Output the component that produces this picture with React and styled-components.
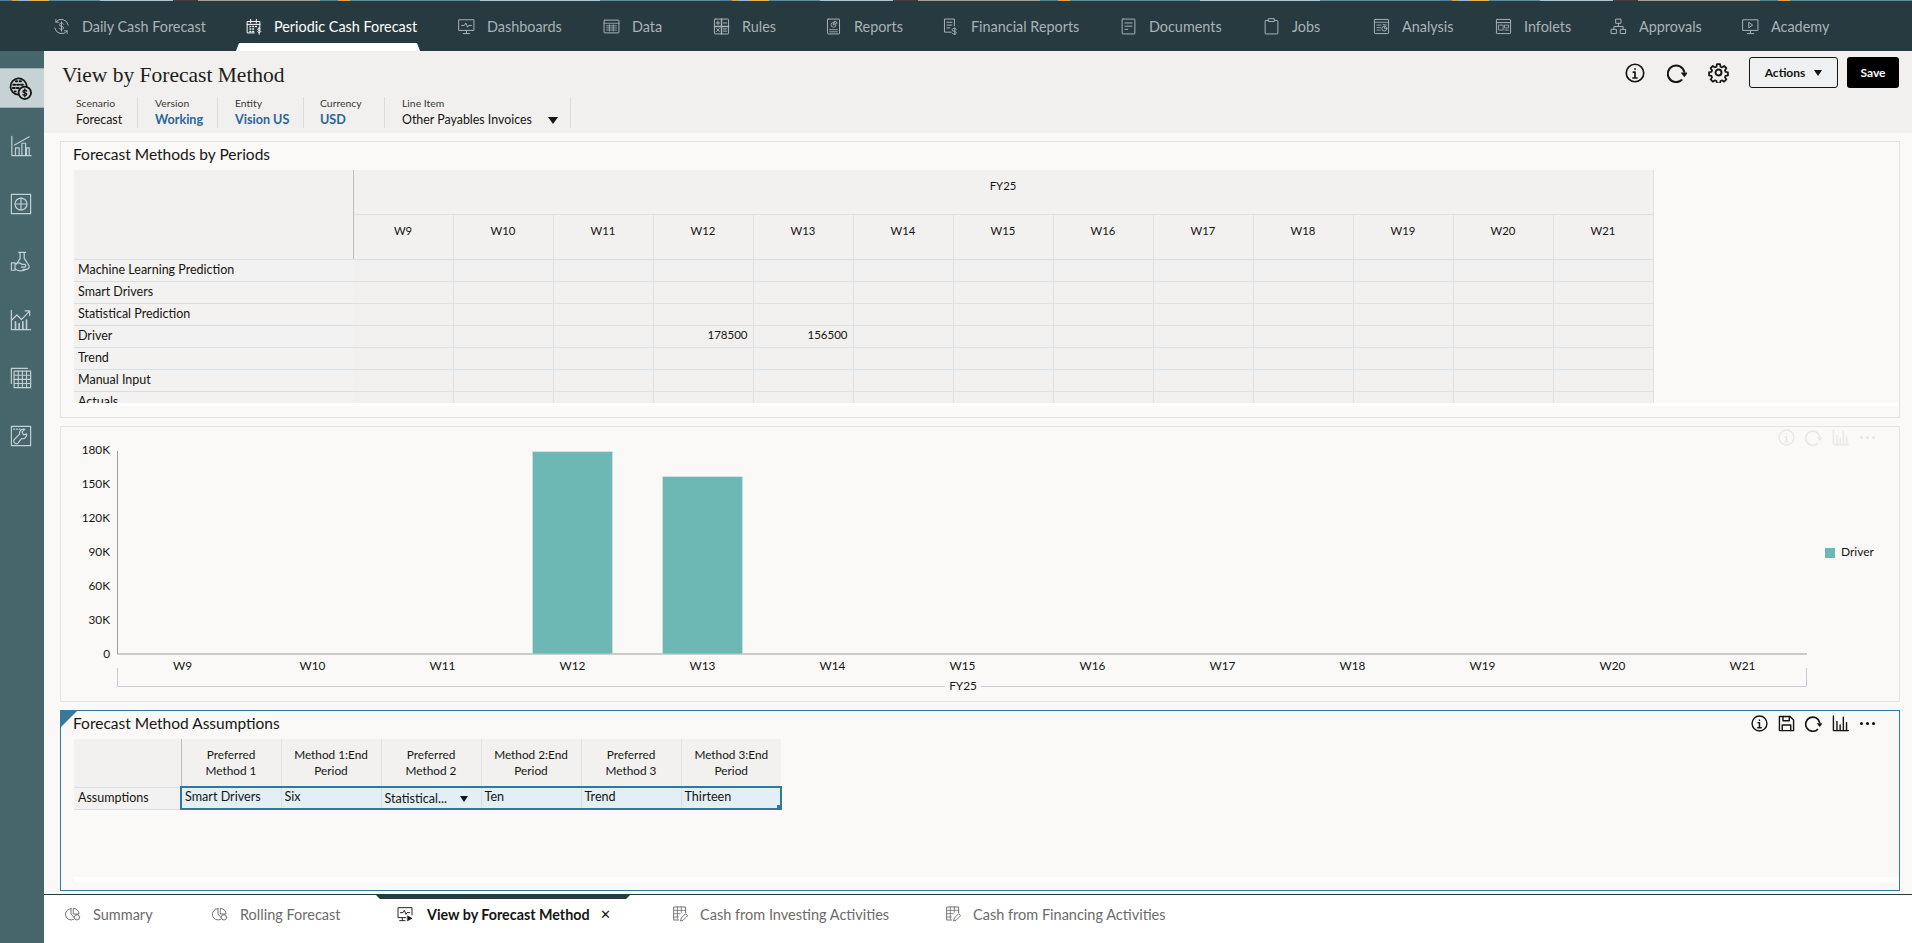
import React from 'react'
import styled, { createGlobalStyle } from 'styled-components'

const GlobalStyle = createGlobalStyle`
  html, body { margin: 0; padding: 0; height: 100%; overflow: hidden; }
  body {
    font-family: Lato, "Noto Sans", "Liberation Sans", sans-serif;
    font-size: 12px;
    color: #161513;
    background: #faf9f7;
  }
  * { box-sizing: border-box; }
`

const Svg = ({ size = 18, sw = 1.5, children }) => (
  <svg width={size} height={size} viewBox="0 0 24 24" fill="none" stroke="currentColor" strokeWidth={sw} strokeLinecap="round" strokeLinejoin="round">
    {children}
  </svg>
)

const dollar = (cx, cy, s = 1) => (
  <path d={`M${cx + 3 * s} ${cy - 2.5 * s}c-.6-1-1.6-1.5-3-1.5-1.8 0-3 .9-3 2.1 0 2.8 6 1.4 6 4 0 1.3-1.3 2-3 2-1.4 0-2.5-.5-3-1.5M${cx} ${cy - 5.5 * s}v11`} />
)

// top navigation icons
const navIcons = {
  daily: (
    <>
      <path d="M21.5 10A10 10 0 0 0 4 5.5M2.5 14A10 10 0 0 0 20 18.5" />
      <path d="M4 2v4h4M20 22v-4h-4" strokeWidth="1.2" />
      <path d="M15 8.8c-.6-1-1.6-1.4-3-1.4-1.8 0-3 .9-3 2.2 0 2.8 6 1.5 6 4.2 0 1.3-1.3 2.1-3 2.1-1.4 0-2.5-.5-3-1.5M12 5.5v13" />
    </>
  ),
  periodic: (
    <>
      <path d="M13 21H3V5h18v8M3 9h18M8 2v5M16 2v5" />
      <path d="M7 12h1M11 12h1M15 12h1M7 15.5h1M11 15.5h1M7 19h1M11 19h1" strokeWidth="2" />
      <path d="M22 15.5c-.5-.6-1.2-1-2-1-1.3 0-2.2.6-2.2 1.5 0 1.9 4.4 1 4.4 2.9 0 .9-1 1.5-2.2 1.5-1 0-1.7-.3-2.2-1M20 13v10" strokeWidth="1.4" />
    </>
  ),
  dashboards: (
    <>
      <rect x="1.5" y="2.5" width="21" height="15" />
      <path d="M5 10.5h4l2-3.5 2.5 6 1.5-2.5h4M12 17.5v4M7.5 22h9" />
    </>
  ),
  data: (
    <>
      <rect x="1.5" y="3" width="21" height="18" rx="1" />
      <path d="M1.5 7.5h21M5 11h14M5 14h14M5 17h14M9 9.5v9M14.5 9.5v9" strokeWidth="1.1" />
    </>
  ),
  rules: (
    <>
      <rect x="2" y="1.5" width="20" height="21" rx="1" />
      <path d="M12 1.5v21M2 12h20" strokeWidth="2" />
      <path d="M7 4.5v5M4.5 7h5M14.5 7h5M5 15l4 4M9 15l-4 4M14.5 15.5h5M14.5 18.5h5" />
    </>
  ),
  reports: (
    <>
      <rect x="3.5" y="1.5" width="17" height="21" rx="1" />
      <path d="M12 6a3.5 3.5 0 1 0 3.5 3.5H12zM14 4.5a3 3 0 0 1 3 3h-3zM6.5 16.5h11M6.5 19.5h11" strokeWidth="1.2" />
    </>
  ),
  financial: (
    <>
      <path d="M13 20H3.5V1.5h14V11" />
      <path d="M7 6h7M7 10h7M7 14h4" />
      {dollar(18, 18, 0.75)}
    </>
  ),
  documents: (
    <>
      <rect x="3" y="1.5" width="18" height="21" rx="1" />
      <path d="M7 7h10M7 11.5h10M7 16h4" />
    </>
  ),
  jobs: (
    <>
      <rect x="3" y="3.5" width="18" height="19" rx="1" />
      <rect x="8" y="1" width="8" height="4" fill="#273a40" />
    </>
  ),
  analysis: (
    <>
      <rect x="2" y="2" width="20" height="20" rx="1" />
      <path d="M2 6h20M5.5 10h6M5.5 13.5h5M5.5 17h5" strokeWidth="1.2" />
      <circle cx="16" cy="15" r="3.5" strokeWidth="1.3" />
      <path d="M16 11.5V15h3.5M14 9l5 1" strokeWidth="1.2" />
    </>
  ),
  infolets: (
    <>
      <rect x="2" y="2" width="20" height="20" rx="1" />
      <path d="M2 6.5h20" />
      <rect x="5.5" y="10" width="6" height="7" strokeWidth="1.2" />
      <rect x="14" y="10" width="5" height="4" strokeWidth="1.2" />
      <path d="M14 17h5" strokeWidth="1.2" />
    </>
  ),
  approvals: (
    <>
      <rect x="8.5" y="1.5" width="7" height="6" />
      <rect x="2" y="16" width="7" height="6" />
      <rect x="15" y="16" width="7" height="6" />
      <path d="M12 7.5v4.5M5.5 16v-4h13v4" />
    </>
  ),
  academy: (
    <>
      <rect x="1.5" y="2.5" width="21" height="15" />
      <path d="M10 6.5l5 3.5-5 3.5zM12 17.5v4M7.5 22h9" />
    </>
  ),
}

// left rail icons
const railIcons = {
  money: (
    <>
      <path d="M10 18.5A8.5 8.5 0 1 1 18.5 9" strokeWidth="1.8" />
      <path d="M7 4.5h1.5M11 4.5h1.5M4.5 8h2M8.5 8h2M12.5 8h2M4 11.5h2M8 11.5h2M6 15h1" strokeWidth="2" />
      <circle cx="16.5" cy="16.5" r="6.5" fill="#c6d2d4" strokeWidth="1.9" />
      <path d="M18.5 14.8c-.4-.7-1-1-2-1-1.2 0-2 .6-2 1.4 0 1.8 4 .9 4 2.7 0 .8-.8 1.3-2 1.3-.9 0-1.6-.3-2-1M16.5 12.3v8.5" strokeWidth="1.3" />
    </>
  ),
  lineBars: (
    <>
      <path d="M2 1.5v21h21" />
      <path d="M5 11L21 2M6 22v-8h4v8M13 22V9h4v13" />
      <path d="M18 22v-8h3v8" />
    </>
  ),
  plusBox: (
    <>
      <rect x="1.5" y="1.5" width="21" height="21" />
      <circle cx="12" cy="12" r="6.5" />
      <path d="M12 5.5v13M5.5 12h13" />
    </>
  ),
  flask: (
    <>
      <path d="M9.5 1.5h7.5M11 1.5V8L7 14.5M15.5 1.5V8l5 7.5c1 2.5-.5 4.500-2.500 4.500h-4" />
      <path d="M1.5 13h4v8h-4zM5.5 14.5c3-2.5 5.500-1.500 7.500 0h3c1.500 0 1.500 3 0 3h-3.500" />
      <path d="M5.5 19.5c4 3 8 3 12.500.5" />
    </>
  ),
  trend: (
    <>
      <path d="M1.5 1.5v21h21" />
      <path d="M2 12L7.5 6.5l5 5L21.5 2M16.5 2h5v5" />
      <path d="M6 22v-8M10 22v-6M14 22v-8M18 22v-10" strokeWidth="1.8" />
    </>
  ),
  grid: (
    <>
      <path d="M1.5 18V1.5H19" />
      <rect x="4.5" y="4.5" width="18" height="18" />
      <path d="M4.5 9h18M4.5 13.5h18M4.5 18h18M9 4.5v18M13.5 4.5v18M18 4.5v18" strokeWidth="1.2" />
    </>
  ),
  wrench: (
    <>
      <rect x="1.5" y="1.5" width="21" height="21" />
      <path d="M4 4.5h1M7 4.5h1M10 4.5h1" strokeWidth="1.4" />
      <path d="M7 20.5c-1.5 0-3-1.5-3-3 0-.8.4-1.5 1-2l5.5-5.5c-.8-2.5 1-5.5 4.5-5.5l1 .2-3 3 1.8 3 3.2-1 .2 1c-.2 3-3 5-5.5 4l-4 5c-.5.5-1 .8-1.7.8z" />
    </>
  ),
}

const tabIcons = {
  pie: (
    <>
      <path d="M9 4a8.5 8.5 0 1 0 4 16" />
      <path d="M9 4v8l5 6M13 3.5A8.5 8.5 0 0 1 21 12h-8z" />
      <circle cx="18" cy="17" r="4" />
    </>
  ),
  monitor: (
    <>
      <path d="M13 17.5H1.5v-15h21v11" />
      <path d="M5 10h4l2-3.5 2.5 6 1.5-2.5h4M8 17.5v4M4 22h8" />
      <path d="M16 15l6.5 3.5-6.5 3.5z" fill="currentColor" strokeWidth="1" />
    </>
  ),
  sheet: (
    <>
      <path d="M10 21H2.5V1.5h18V10" />
      <path d="M2.5 6.5h18M2.5 11.5h10M2.5 16.5h7M8 1.5v18M14 1.5v8" strokeWidth="1.2" />
      <path d="M13 22l1-4 6.5-6.5 3 3L17 21z" />
    </>
  ),
}

const InfoIcon = ({ size }) => (
  <Svg size={size} sw={2}>
    <circle cx="12" cy="12" r="10.5" />
    <path d="M12 7v.6M10 11h2v7M9.5 18h5" />
  </Svg>
)
const RefreshIcon = ({ size }) => (
  <Svg size={size} sw={2.4}>
    <path d="M17.5 20.5A10 10 0 1 1 20.7 10.5" />
    <path d="M16.5 11.5h8.5l-4.2 5.5z" fill="currentColor" stroke="none" />
  </Svg>
)
const GearIcon = ({ size }) => (
  <Svg size={size} sw={2.2}>
    <circle cx="12" cy="12" r="3.4" />
    <path d="M10 1.5h4l.6 3.2 1.9.8 2.7-1.8 2.8 2.8-1.8 2.7.8 1.9 3 .6v4l-3 .6-.8 1.9 1.8 2.7-2.8 2.8-2.7-1.8-1.9.8-.6 3h-4l-.6-3-1.9-.8-2.7 1.8-2.8-2.8 1.8-2.7-.8-1.9-3-.6v-4l3-.6.8-1.9L2 6.5l2.8-2.8L7.5 5.5l1.9-.8z" transform="translate(1.2 1.2) scale(.9)" />
  </Svg>
)
const SaveIcon = ({ size }) => (
  <Svg size={size} sw={2}>
    <path d="M2 2h15l5 5v15H2z" />
    <path d="M7 2v6h9V2M6 22v-8h12v8" />
  </Svg>
)
const BarsIcon = ({ size }) => (
  <Svg size={size} sw={2}>
    <path d="M2 1.5V22h21" />
    <path d="M7 22V9M11.5 22V14M16 22V3M20.5 22V11" />
  </Svg>
)
const DotsIcon = ({ size }) => (
  <svg width={size} height={size} viewBox="0 0 24 24" fill="currentColor">
    <circle cx="3.5" cy="12" r="2.2" />
    <circle cx="12" cy="12" r="2.2" />
    <circle cx="20.5" cy="12" r="2.2" />
  </svg>
)

const Page = styled.div`
  display: grid;
  grid-template-rows: 1px 50px 1fr;
  width: 1912px;
  height: 943px;
  overflow: hidden;
`

const PhotoStrip = styled.div`
  background-size: 720px 1px;
  background-image: linear-gradient(90deg,
    #4f7f99 0 12px, #e0a040 12px 18px, #9fb6c0 18px 30px, #e8b050 30px 49px,
    #5d8ea6 49px 100px, #a7c6d2 100px 173px, #4a3a38 173px 198px,
    #a8a090 198px 320px, #4f7f99 320px 338px, #e0a040 338px 350px,
    #5d8ea6 350px 480px, #a7c6d2 480px 600px, #5d8ea6 600px 720px);
`

const TopNav = styled.nav`
  display: grid;
  grid-template-columns: 192px 213px 145px 110px 112px 117px 178px 143px 110px 122px 115px 132px 120px;
  padding: 0 0 0 33px;
  background: #273a40;
`

const NavItem = styled.a`
  position: relative;
  display: flex;
  align-items: center;
  gap: 12px;
  padding-left: 20px;
  font-size: 14.4px;
  color: ${(p) => (p.$active ? '#ffffff' : '#a9b3b5')};

  ${(p) => p.$active && `
    &::after {
      content: '';
      position: absolute;
      left: 11px;
      width: 184px;
      bottom: 0;
      height: 8px;
      background: #fff;
      clip-path: polygon(3px 0, 181px 0, 184px 100%, 0 100%);
    }
  `}

  svg { flex: none; }
`

const Body = styled.div`
  display: grid;
  grid-template-columns: 44px 1fr;
  min-height: 0;
`

const Rail = styled.aside`
  display: flex;
  flex-direction: column;
  padding-top: 17px;
  background: #46666c;
`

const RailItem = styled.div`
  display: flex;
  align-items: center;
  justify-content: center;
  height: ${(p) => (p.$active ? '40px' : '58px')};
  margin-bottom: ${(p) => (p.$active ? '9px' : '0')};
  padding-right: 3px;
  color: ${(p) => (p.$active ? '#161513' : '#c3cfd1')};
  background: ${(p) => (p.$active ? '#c6d2d4' : 'transparent')};
  border-top: ${(p) => (p.$active ? '1px solid #9fb0b3' : 'none')};
  border-bottom: ${(p) => (p.$active ? '1px solid #9fb0b3' : 'none')};
`

const Main = styled.main`
  display: grid;
  grid-template-rows: 82px 1fr 49px;
  min-width: 0;
`

const PageHeader = styled.header`
  display: flex;
  justify-content: space-between;
  padding: 6px 13px 0 18px;
  background: #f1f0ee;
`

const PageTitle = styled.h1`
  margin: 0 0 7px;
  font-family: "Liberation Serif", serif;
  font-size: 21.5px;
  font-weight: 400;
  line-height: 36px;
  color: #1f1d1b;
`

const PovBar = styled.div`
  display: flex;
  height: 31px;
  margin-top: -3px;
`

const PovItem = styled.div`
  display: flex;
  flex-direction: column;
  justify-content: space-between;
  width: ${(p) => p.$w}px;
  padding: 0 12px 0 ${(p) => p.$left || '17px'};
  border-right: 1px solid #dedcd8;
  white-space: nowrap;
`

const PovLabel = styled.span`
  font-size: 10.4px;
  line-height: 13px;
  color: #3b3936;
`

const PovValue = styled.span`
  display: flex;
  align-items: center;
  justify-content: space-between;
  font-size: ${(p) => (p.$link ? '12.6px' : '12.4px')};
  line-height: 16px;
  font-weight: ${(p) => (p.$link ? 700 : 400)};
  color: ${(p) => (p.$link ? '#2b659b' : '#161513')};
`

const Caret = styled.i`
  display: inline-block;
  width: 0;
  height: 0;
  border-style: solid;
  border-width: ${(p) => (p.$small ? '6px 4.5px 0' : '7px 5px 0')};
  border-color: #161513 transparent transparent;
`

const HeaderTools = styled.div`
  display: flex;
  align-items: flex-start;
`

const IconBtn = styled.button`
  display: flex;
  align-items: center;
  justify-content: center;
  width: 21px;
  height: 31px;
  margin-right: 21px;
  padding: 0;
  border: 0;
  background: none;
  color: #161513;
`

const ActionsBtn = styled.button`
  display: flex;
  align-items: center;
  justify-content: center;
  gap: 9px;
  width: 89px;
  height: 31px;
  margin-left: -1px;
  border: 1px solid #161513;
  border-radius: 3px;
  background: #eef0f1;
  font: 700 12px Lato, sans-serif;
  color: #161513;
`

const SaveBtn = styled.button`
  width: 52px;
  height: 31px;
  margin-left: 9px;
  border: 0;
  border-radius: 3px;
  background: #000;
  font: 700 12px Lato, sans-serif;
  color: #fff;
`

const Panels = styled.div`
  display: flex;
  flex-direction: column;
  gap: 8px;
  padding: 8px 12px 0 16px;
  min-height: 0;
`

const Panel = styled.section`
  position: relative;
  display: flex;
  flex-direction: column;
  height: ${(p) => p.$h}px;
  border: 1px solid ${(p) => (p.$focus ? '#2f7a9c' : '#e4e3df')};
  background: #faf9f7;

  ${(p) => p.$focus && `
    &::before {
      content: '';
      position: absolute;
      left: -1px;
      top: -1px;
      width: 18px;
      height: 18px;
      background: #35799b;
      clip-path: polygon(0 0, 100% 0, 0 100%);
    }
  `}
`

const PanelHead = styled.div`
  display: flex;
  align-items: center;
  justify-content: space-between;
  flex: none;
  height: 28px;
  padding: 0 23px 4px 12px;
`

const PanelTitle = styled.h2`
  margin: 0;
  font-size: 15.5px;
  font-weight: 400;
  color: #161513;
`

const PanelTools = styled.div`
  display: flex;
  gap: 10px;
  color: ${(p) => (p.$faded ? '#e9e8e5' : '#161513')};

  ${(p) => p.$faded && `
    position: absolute;
    top: 0;
    right: 23px;
  `}
`

const ToolIcon = styled.span`
  display: flex;
  width: 17px;
  height: 20px;
  align-items: center;
`

const TableClip = styled.div`
  flex: none;
  height: ${(p) => p.$h}px;
  margin-left: 13px;
  overflow: hidden;
`

const Sheet = styled.table`
  border-collapse: collapse;
  table-layout: fixed;
  font-size: 12px;
`

const Corner = styled.th`
  width: ${(p) => p.$w}px;
  padding: 0;
  background: #f2f1ef;
  border-right: 1px solid #b9bec0;
  border-bottom: 1px solid #d7e0e6;
`

const ColHead = styled.th`
  width: 100px;
  height: ${(p) => p.$h}px;
  padding: ${(p) => (p.$center ? '0 4px' : '8px 0 0')};
  vertical-align: ${(p) => (p.$center ? 'middle' : 'top')};
  font-size: ${(p) => (p.$center ? '11.8px' : '11.3px')};
  font-weight: 400;
  line-height: 16px;
  text-align: center;
  background: #f2f1ef;
  border-right: 1px solid #dce2e6;
  border-bottom: 1px solid #d7e0e6;

  &:last-child { border-right: ${(p) => (p.$center ? 'none' : '1px solid #dce2e6')}; }
`

const RowHead = styled.th`
  height: 22px;
  padding: 0 4px 1px;
  font-size: 12.5px;
  line-height: 14px;
  font-weight: 400;
  text-align: left;
  background: #f3f2f0;
  border-bottom: 1px solid #d7e0e6;
`

const Cell = styled.td`
  height: 22px;
  padding: 0 5px 2px;
  font-size: 11.5px;
  line-height: 14px;
  text-align: right;
  background: #f1f0ee;
  border-right: 1px solid #dce2e6;
  border-bottom: 1px solid #dce2e6;
`

const InputCell = styled.td`
  position: relative;
  height: 22px;
  padding: 0 3px 3px;
  font-size: 12.6px;
  line-height: 14px;
  text-align: left;
  background: #e4eff5;
  border-top: 2px solid #2f7a9c;
  border-bottom: 2px solid #2f7a9c;
  border-right: 1px solid #d3dfe6;

  &:first-of-type { border-left: 2px solid #2f7a9c; }
  &:last-child {
    border-right: 2px solid #2f7a9c;
    &::after {
      content: '';
      position: absolute;
      right: -2px;
      bottom: -2px;
      width: 5px;
      height: 5px;
      background: #2f7a9c;
    }
  }
`

const CellRow = styled.span`
  display: flex;
  align-items: center;
  justify-content: space-between;
  margin-bottom: -3px;
  padding: 1px 10px 0 0;
`

const WhiteStrip = styled.div`
  flex: none;
  height: ${(p) => p.$h}px;
  margin-top: ${(p) => p.$top}px;
  margin-left: 13px;
  background: #fff;
`

const BottomTabs = styled.div`
  position: relative;
  display: grid;
  grid-template-columns: 147px 185px 275px 273px 1fr;
  align-items: center;
  height: 49px;
  padding: 0 0 10px 21px;
  background: #fff;
  border-top: 1px solid #273a40;

  &::before {
    content: '';
    position: absolute;
    left: 332px;
    top: 0;
    width: 254px;
    height: 4px;
    background: #273a40;
    clip-path: polygon(0 0, 100% 0, 98.5% 100%, 1.5% 100%);
  }
`

const Tab = styled.a`
  display: flex;
  align-items: center;
  gap: ${(p) => (p.$active ? '14px' : '12px')};
  font-size: ${(p) => (p.$active ? '14.3px' : '14.5px')};
  font-weight: ${(p) => (p.$active ? 700 : 400)};
  color: ${(p) => (p.$active ? '#161513' : '#6d6b68')};
`

const CloseX = styled.span`
  margin-left: -4px;
  font-size: 13px;
  font-weight: 400;
`

const Legend = styled.text`
  font-size: 12px;
  fill: #161513;
`

const navItems = [
  ['daily', 'Daily Cash Forecast'],
  ['periodic', 'Periodic Cash Forecast', true],
  ['dashboards', 'Dashboards'],
  ['data', 'Data'],
  ['rules', 'Rules'],
  ['reports', 'Reports'],
  ['financial', 'Financial Reports'],
  ['documents', 'Documents'],
  ['jobs', 'Jobs'],
  ['analysis', 'Analysis'],
  ['infolets', 'Infolets'],
  ['approvals', 'Approvals'],
  ['academy', 'Academy'],
]

const weeks = ['W9', 'W10', 'W11', 'W12', 'W13', 'W14', 'W15', 'W16', 'W17', 'W18', 'W19', 'W20', 'W21']
const methods = ['Machine Learning Prediction', 'Smart Drivers', 'Statistical Prediction', 'Driver', 'Trend', 'Manual Input', 'Actuals']
const driverValues = { W12: '178500', W13: '156500' }
const assumptionHeads = [
  ['Preferred', 'Method 1'],
  ['Method 1:End', 'Period'],
  ['Preferred', 'Method 2'],
  ['Method 2:End', 'Period'],
  ['Preferred', 'Method 3'],
  ['Method 3:End', 'Period'],
]

const Chart = () => {
  const base = 654
  const scale = 204 / 180
  const left = 117.5
  const col = 130
  const ticks = [0, 30, 60, 90, 120, 150, 180]
  const bars = { W12: 178.5, W13: 156.5 }
  return (
    <svg width="1838" height="274" viewBox="61 427 1838 274" fontFamily="Lato, sans-serif" fontSize="11.8" fill="#161513">
      {ticks.map((t) => (
        <text key={t} x="110" y={base - t * scale + 4} textAnchor="end">{t ? `${t}K` : '0'}</text>
      ))}
      <path d={`M${left} 451V${base}H1807`} fill="none" stroke="#9e9d9a" strokeWidth="1" />
      {weeks.map((w, i) => {
        const cx = left + col * (i + 0.5)
        return (
          <g key={w}>
            {bars[w] && (
              <rect x={cx - 40} y={base - bars[w] * scale} width="80" height={bars[w] * scale} fill="#6db7b4" stroke="#cfe5e5" strokeWidth="0.6" />
            )}
            <text x={cx} y="670" textAnchor="middle">{w}</text>
          </g>
        )
      })}
      <path d="M117.5 668V686.5H1806.5V668" fill="none" stroke="#cbc9dc" strokeWidth="1" />
      <rect x="945" y="680" width="36" height="14" fill="#faf9f7" />
      <text x="963" y="690" textAnchor="middle">FY25</text>
      <rect x="1825" y="548" width="10" height="10" fill="#6db7b4" />
      <Legend x="1841" y="556">Driver</Legend>
    </svg>
  )
}

export default function App() {
  return (
    <Page>
      <GlobalStyle />
      <PhotoStrip />
      <TopNav>
        {navItems.map(([icon, label, active]) => (
          <NavItem key={label} $active={active}>
            <Svg size={17} sw={1.4}>{navIcons[icon]}</Svg>
            {label}
          </NavItem>
        ))}
      </TopNav>
      <Body>
        <Rail>
          <RailItem $active><Svg size={23} sw={1.5}>{railIcons.money}</Svg></RailItem>
          <RailItem><Svg size={22} sw={1.3}>{railIcons.lineBars}</Svg></RailItem>
          <RailItem><Svg size={22} sw={1.3}>{railIcons.plusBox}</Svg></RailItem>
          <RailItem><Svg size={22} sw={1.3}>{railIcons.flask}</Svg></RailItem>
          <RailItem><Svg size={22} sw={1.3}>{railIcons.trend}</Svg></RailItem>
          <RailItem><Svg size={22} sw={1.3}>{railIcons.grid}</Svg></RailItem>
          <RailItem><Svg size={22} sw={1.3}>{railIcons.wrench}</Svg></RailItem>
        </Rail>
        <Main>
          <PageHeader>
            <div>
              <PageTitle>View by Forecast Method</PageTitle>
              <PovBar>
                <PovItem $w={76} $left="14px">
                  <PovLabel>Scenario</PovLabel>
                  <PovValue>Forecast</PovValue>
                </PovItem>
                <PovItem $w={80}>
                  <PovLabel>Version</PovLabel>
                  <PovValue $link>Working</PovValue>
                </PovItem>
                <PovItem $w={86}>
                  <PovLabel>Entity</PovLabel>
                  <PovValue $link>Vision US</PovValue>
                </PovItem>
                <PovItem $w={81} $left="16px">
                  <PovLabel>Currency</PovLabel>
                  <PovValue $link>USD</PovValue>
                </PovItem>
                <PovItem $w={186}>
                  <PovLabel>Line Item</PovLabel>
                  <PovValue>Other Payables Invoices <Caret /></PovValue>
                </PovItem>
              </PovBar>
            </div>
            <HeaderTools>
              <IconBtn><InfoIcon size={20} /></IconBtn>
              <IconBtn><RefreshIcon size={20} /></IconBtn>
              <IconBtn><GearIcon size={21} /></IconBtn>
              <ActionsBtn>Actions <Caret $small /></ActionsBtn>
              <SaveBtn>Save</SaveBtn>
            </HeaderTools>
          </PageHeader>

          <Panels>
            <Panel $h={277}>
              <PanelHead>
                <PanelTitle>Forecast Methods by Periods</PanelTitle>
              </PanelHead>
              <TableClip $h={233}>
                <Sheet>
                  <thead>
                    <tr>
                      <Corner $w={279} rowSpan={2} />
                      <ColHead $h={44} colSpan={13}>FY25</ColHead>
                    </tr>
                    <tr>
                      {weeks.map((w) => <ColHead key={w} $h={45}>{w}</ColHead>)}
                    </tr>
                  </thead>
                  <tbody>
                    {methods.map((m) => (
                      <tr key={m}>
                        <RowHead>{m}</RowHead>
                        {weeks.map((w) => (
                          <Cell key={w}>{m === 'Driver' ? driverValues[w] : ''}</Cell>
                        ))}
                      </tr>
                    ))}
                  </tbody>
                </Sheet>
              </TableClip>
              <WhiteStrip $h={3} $top={0} />
            </Panel>

            <Panel $h={276}>
              <Chart />
              <PanelTools $faded>
                <ToolIcon><InfoIcon size={17} /></ToolIcon>
                <ToolIcon><RefreshIcon size={17} /></ToolIcon>
                <ToolIcon><BarsIcon size={17} /></ToolIcon>
                <ToolIcon><DotsIcon size={17} /></ToolIcon>
              </PanelTools>
            </Panel>

            <Panel $h={181} $focus>
              <PanelHead>
                <PanelTitle>Forecast Method Assumptions</PanelTitle>
                <PanelTools>
                  <ToolIcon><InfoIcon size={17} /></ToolIcon>
                  <ToolIcon><SaveIcon size={17} /></ToolIcon>
                  <ToolIcon><RefreshIcon size={17} /></ToolIcon>
                  <ToolIcon><BarsIcon size={17} /></ToolIcon>
                  <ToolIcon><DotsIcon size={17} /></ToolIcon>
                </PanelTools>
              </PanelHead>
              <TableClip $h={74}>
                <Sheet>
                  <thead>
                    <tr>
                      <Corner $w={107} />
                      {assumptionHeads.map(([a, b], i) => (
                        <ColHead key={i} $h={48} $center>{a}<br />{b}</ColHead>
                      ))}
                    </tr>
                  </thead>
                  <tbody>
                    <tr>
                      <RowHead>Assumptions</RowHead>
                      <InputCell>Smart Drivers</InputCell>
                      <InputCell>Six</InputCell>
                      <InputCell><CellRow>Statistical... <Caret $small /></CellRow></InputCell>
                      <InputCell>Ten</InputCell>
                      <InputCell>Trend</InputCell>
                      <InputCell>Thirteen</InputCell>
                    </tr>
                  </tbody>
                </Sheet>
              </TableClip>
              <WhiteStrip $h={5} $top={64} />
            </Panel>
          </Panels>

          <BottomTabs>
            <Tab><Svg size={16} sw={1.4}>{tabIcons.pie}</Svg>Summary</Tab>
            <Tab><Svg size={16} sw={1.4}>{tabIcons.pie}</Svg>Rolling Forecast</Tab>
            <Tab $active><Svg size={16} sw={1.4}>{tabIcons.monitor}</Svg>View by Forecast Method <CloseX>✕</CloseX></Tab>
            <Tab><Svg size={16} sw={1.4}>{tabIcons.sheet}</Svg>Cash from Investing Activities</Tab>
            <Tab><Svg size={16} sw={1.4}>{tabIcons.sheet}</Svg>Cash from Financing Activities</Tab>
          </BottomTabs>
        </Main>
      </Body>
    </Page>
  )
}
